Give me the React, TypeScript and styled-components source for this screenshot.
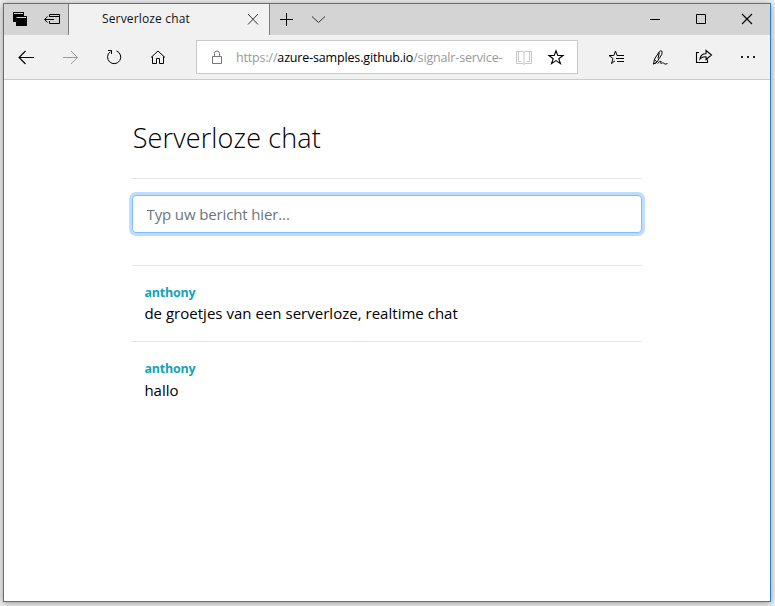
import React from "react";
import styled, { createGlobalStyle } from "styled-components";

const GlobalStyle = createGlobalStyle`
  * { box-sizing: border-box; }
  html, body { margin: 0; }
  body {
    font-family: "Open Sans", "Noto Sans", sans-serif;
    background: #e4e4e4;
    overflow: hidden;
  }
`;

const Desktop = styled.div`
  width: 775px;
  height: 606px;
  padding: 3px 4px 4px 3px;
  background: #f0f0f0;
`;

const Window = styled.div`
  display: flex;
  flex-direction: column;
  width: 768px;
  height: 599px;
  border: 1px solid #2a7fc1;
  background: #fff;
  box-shadow: 0 1px 7px rgba(0, 0, 0, 0.4);
`;

const TitleBar = styled.div`
  display: flex;
  height: 31px;
  background: #d4d4d4;
`;

const Cell = styled.div<{ $w: number }>`
  display: flex;
  align-items: center;
  justify-content: center;
  flex: none;
  width: ${(p) => p.$w}px;
`;

const Tab = styled.div`
  display: flex;
  align-items: center;
  width: 202px;
  padding: 0 5px 0 33px;
  border-left: 1px solid #7c7c7c;
  border-right: 1px solid #7c7c7c;
  background: #f1f1f1;
`;

const TabTitle = styled.span`
  flex: 1;
  font-size: 12px;
  line-height: 16px;
  letter-spacing: 0.15px;
  color: #111;
  white-space: nowrap;
  margin-top: -1px;
`;

const Spacer = styled.div`
  flex: 1;
`;

const Toolbar = styled.div`
  display: flex;
  align-items: stretch;
  height: 45px;
  background: #f1f1f1;
  border-bottom: 1px solid #cbcbcb;
`;

const AddressBar = styled.div`
  display: flex;
  align-items: center;
  width: 382px;
  height: 34px;
  margin: 5px 16px 0;
  padding-left: 10px;
  border: 1px solid #c9c9c9;
  background: #fff;
`;

const Url = styled.div`
  flex: none;
  width: 271px;
  margin: 1px 7px 0 9px;
  font-size: 12.5px;
  line-height: 18px;
  letter-spacing: -0.16px;
  white-space: nowrap;
  color: #999;
`;

const Host = styled.span`
  color: #000;
`;

const Glyph = styled.svg<{ $tone?: string }>`
  display: block;
  flex: none;
  overflow: visible;
  fill: none;
  stroke: ${(p) => p.$tone ?? "#000"};
  stroke-width: 1;
`;

const Page = styled.main`
  width: 510px;
  margin: 0 auto 0 128px;
  padding-top: 40px;
`;

const Heading = styled.h1`
  margin: 0;
  height: 58px;
  padding-left: 0.7px;
  font-size: 27px;
  font-weight: 300;
  line-height: 36px;
  letter-spacing: 0.14px;
  color: #000;
  white-space: nowrap;
`;

const Rule = styled.hr`
  margin: 0;
  border: 0;
  border-top: 1px solid #e5e5e5;
`;

const MessageInput = styled.input`
  display: block;
  width: 510px;
  height: 38px;
  margin: 16px 0 32px;
  padding: 0 13.5px;
  border: 1px solid #80bdff;
  border-radius: 4px;
  outline: 0;
  box-shadow: 0 0 0 3px #bfdeff;
  font-family: inherit;
  font-size: 15px;
  letter-spacing: -0.13px;
  color: #495057;

  &::placeholder {
    color: #6c757d;
    opacity: 1;
  }
`;

const Author = styled.div`
  font-size: 12.5px;
  font-weight: 700;
  line-height: 18px;
  letter-spacing: -0.22px;
  color: #17a2b8;
`;

const Body = styled.div`
  margin-top: -1px;
  font-size: 15px;
  line-height: 24px;
  letter-spacing: 0.02px;
  color: #000;
  white-space: nowrap;
`;

const Message = styled.article`
  height: 76px;
  padding: 18px 12.4px 0;
  border-top: 1px solid #e5e5e5;

  &:last-child ${Body} {
    margin-top: 0;
  }
`;

type IconProps = { h?: number; tone?: string; children: React.ReactNode };

const Icon = ({ h = 20, tone, children }: IconProps) => (
  <Glyph width={20} height={h} viewBox={`0 0 20 ${h}`} $tone={tone} aria-hidden="true">
    {children}
  </Glyph>
);

const messages = [
  { author: "anthony", text: "de groetjes van een serverloze, realtime chat" },
  { author: "anthony", text: "hallo" },
];

export default function App() {
  return (
    <>
      <GlobalStyle />
      <Desktop>
        <Window>
          <TitleBar>
            <Cell $w={32}>
              <Icon h={21}>
                <path d="M3 3h11v10H3z" fill="#000" stroke="none" />
                <path d="M4 4.5h9" stroke="#d4d4d4" />
                <path d="M6 7h11v10H6z" fill="#000" stroke="none" />
                <path d="M6.500 8.500h9.500" stroke="#d4d4d4" />
              </Icon>
            </Cell>
            <Cell $w={32}>
              <Icon h={21}>
                <path d="M7.5 8V5.5h10v9h-10V12M8 7.5h9M3 10.5h9M5.5 7.5l-3 3 3 3" />
              </Icon>
            </Cell>
            <Tab>
              <TabTitle>Serverloze chat</TabTitle>
              <Cell $w={22}>
                <Icon h={21} tone="#333">
                  <path d="M5 5l10 10.5M15 5L5 15.5" />
                </Icon>
              </Cell>
            </Tab>
            <Cell $w={32}>
              <Icon h={21}>
                <path d="M10.5 4v13M4 10.5h13" />
              </Icon>
            </Cell>
            <Cell $w={32}>
              <Icon h={21} tone="#333">
                <path d="M4 7.5l6.5 6 6.5-6" />
              </Icon>
            </Cell>
            <Spacer />
            <Cell $w={46}>
              <Icon h={21}>
                <path d="M5 10.5h10" />
              </Icon>
            </Cell>
            <Cell $w={46}>
              <Icon h={21}>
                <path d="M5.5 5.5h9v9h-9z" />
              </Icon>
            </Cell>
            <Cell $w={46}>
              <Icon h={21}>
                <path d="M5 5l10 10M15 5L5 15" strokeWidth="1.1" />
              </Icon>
            </Cell>
          </TitleBar>
          <Toolbar>
            <Cell $w={44}>
              <Icon>
                <path d="M3 10.5h15M9.5 4L3 10.5 9.5 17" strokeWidth="1.1" />
              </Icon>
            </Cell>
            <Cell $w={44}>
              <Icon tone="#9b9b9b">
                <path d="M3 10.5h14.500M11 4l6.500 6.500L11 17" />
              </Icon>
            </Cell>
            <Cell $w={44}>
              <Icon>
                <path d="M12.500 3.900A6.600 6.600 0 1 1 6.300 4.700M4 3.500h3.500V7" />
              </Icon>
            </Cell>
            <Cell $w={44}>
              <Icon>
                <path d="M3 10.500L10 4l7 6.500M4.500 9.500v7h4v-5h3v5h4v-7" />
              </Icon>
            </Cell>
            <AddressBar>
              <Icon tone="#777">
                <path d="M5.500 9.500h9v7h-9zM7.500 9.500V6.500a2.500 2.500 0 0 1 5 0v3" />
              </Icon>
              <Url>
                https://<Host>azure-samples.github.io</Host>/signalr-service-
              </Url>
              <Icon tone="#c6c6c6">
                <path d="M2.500 4.500H8q2 0 2 1 0-1 2-1h5.500v12H12q-2 0-2 1 0-1-2-1H2.500zM10 5.500v11M4.500 5v9.500h3M15.500 5v9.500h-3" />
              </Icon>
              <Cell $w={43}>
                <Icon>
                  <path d="M10 3.700l1.800 4.800h5.200l-4.200 3.200 1.700 5-4.500-3.100-4.500 3.100 1.700-5L3 8.500h5.200z" strokeWidth="1.1" />
                </Icon>
              </Cell>
            </AddressBar>
            <Cell $w={44}>
              <Icon>
                <path d="M18 8.500h-7L9.500 4 7.800 8.500H3l4 3-1.500 5 3.500-2.700M10 11.500H18M11 14.500h7" />
              </Icon>
            </Cell>
            <Cell $w={44}>
              <Icon>
                <path d="M3.500 17l1-5 5-7.500q1.500-1.500 2.200-.500.900.800 0 3.500L7 15zM4.500 12.500l2 2M9.300 5.500l-1.300 6M3.500 17q2-.500 4-2.500M7.500 16.500q3-3 3.500-2.200c.500.700-1 2.200 0 2.200s1.500-1.200 2.500-.500 1.500 1.800 4 .500" />
              </Icon>
            </Cell>
            <Cell $w={44}>
              <Icon>
                <path d="M5 5.500H2.500v10h11v-3M6 12q.500-5.300 6-5.300V3.500l5.500 4.500L12 12.500V9.800q-4-.200-6 2.200z" strokeWidth="1.1" />
              </Icon>
            </Cell>
            <Cell $w={44}>
              <Icon>
                <path d="M3 9h2v2H3zM9 9h2v2H9zM15 9h2v2h-2z" fill="#222" stroke="none" />
              </Icon>
            </Cell>
          </Toolbar>
          <Page>
            <Heading>Serverloze chat</Heading>
            <Rule />
            <MessageInput placeholder="Typ uw bericht hier..." />
            {messages.map((m, i) => (
              <Message key={i}>
                <Author>{m.author}</Author>
                <Body>{m.text}</Body>
              </Message>
            ))}
          </Page>
        </Window>
      </Desktop>
    </>
  );
}
